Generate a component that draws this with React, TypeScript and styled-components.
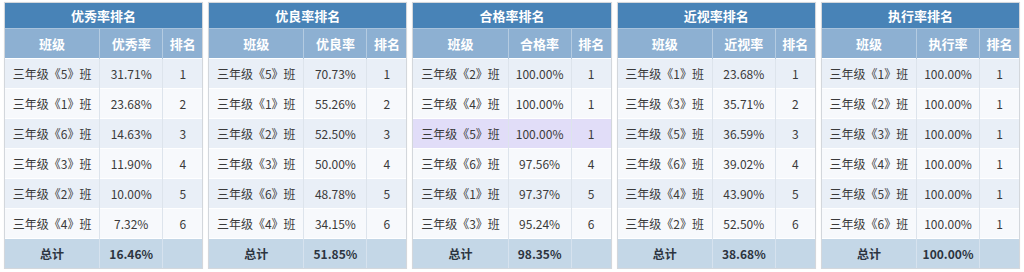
import React from 'react';
import styled, { createGlobalStyle } from 'styled-components';

const GlobalStyle = createGlobalStyle`
    body {
        margin: 0;
        background: #fff;
        font-family: "Noto Sans CJK SC", "Liberation Sans", sans-serif;
    }
`;

const Container = styled.div`
    display: flex;
    gap: 5px;
    padding: 2px 4px 0 4px;
`;

const Panel = styled.div`
    flex: 1;
    min-width: 0;
    border: 1px solid #d3d7dc;
    box-shadow: 0 0 1px rgba(0, 0, 0, 0.08);
`;

const Board = styled.table`
    width: 100%;
    border-collapse: collapse;
    table-layout: fixed;
    font-size: 12px;
    color: #3a3a3a;
`;

const Title = styled.th`
    height: 25px;
    padding: 0;
    background: #4883b7;
    color: #fff;
    font-size: 13px;
    font-weight: bold;
    text-align: center;
`;

const Head = styled.th`
    height: 29px;
    padding: 0;
    background: #8db0d2;
    color: #fff;
    font-size: 13px;
    font-weight: bold;
    text-align: center;
    border-top: 1px solid #a9c3dc;
    border-left: 1px solid #b4cbe1;

    &:first-child {
        border-left: none;
    }
`;

const Row = styled.tr<{ $alt: boolean; $mark?: boolean }>`
    background: ${({ $alt, $mark }) => ($mark ? '#e1ddf8' : $alt ? '#f7f9fc' : '#e9eff7')};
`;

const Cell = styled.td`
    height: 29px;
    padding: 0;
    text-align: center;
    border-top: 1px solid #fff;
    border-left: 1px solid #dde4ec;

    &:first-child {
        border-left: none;
    }
`;

const Total = styled.td`
    height: 29px;
    padding: 0;
    text-align: center;
    background: #c4d7e7;
    font-weight: bold;
    color: #2c3440;
    border-top: 1px solid #fff;
    border-left: 1px solid #d6e2ee;

    &:first-child {
        border-left: none;
    }
`;

type Item = [string, string, number];

type Rank = {
    title: string;
    label: string;
    total: string;
    rows: Item[];
    mark?: number;
};

const cls = (n: number) => `三年级《${n}》班`;

const ranks: Rank[] = [
    {
        title: '优秀率排名', label: '优秀率', total: '16.46%',
        rows: [[cls(5), '31.71%', 1], [cls(1), '23.68%', 2], [cls(6), '14.63%', 3], [cls(3), '11.90%', 4], [cls(2), '10.00%', 5], [cls(4), '7.32%', 6]],
    },
    {
        title: '优良率排名', label: '优良率', total: '51.85%',
        rows: [[cls(5), '70.73%', 1], [cls(1), '55.26%', 2], [cls(2), '52.50%', 3], [cls(3), '50.00%', 4], [cls(6), '48.78%', 5], [cls(4), '34.15%', 6]],
    },
    {
        title: '合格率排名', label: '合格率', total: '98.35%', mark: 2,
        rows: [[cls(2), '100.00%', 1], [cls(4), '100.00%', 1], [cls(5), '100.00%', 1], [cls(6), '97.56%', 4], [cls(1), '97.37%', 5], [cls(3), '95.24%', 6]],
    },
    {
        title: '近视率排名', label: '近视率', total: '38.68%',
        rows: [[cls(1), '23.68%', 1], [cls(3), '35.71%', 2], [cls(5), '36.59%', 3], [cls(6), '39.02%', 4], [cls(4), '43.90%', 5], [cls(2), '52.50%', 6]],
    },
    {
        title: '执行率排名', label: '执行率', total: '100.00%',
        rows: [1, 2, 3, 4, 5, 6].map((n) => [cls(n), '100.00%', 1] as Item),
    },
];

const App: React.FC = () => (
    <>
        <GlobalStyle />
        <Container>
            {ranks.map((rank) => (
                <Panel key={rank.title}>
                    <Board>
                        <colgroup>
                            <col style={{ width: '48%' }} />
                            <col style={{ width: '32%' }} />
                            <col style={{ width: '20%' }} />
                        </colgroup>
                        <thead>
                            <tr><Title colSpan={3}>{rank.title}</Title></tr>
                            <tr>
                                <Head>班级</Head>
                                <Head>{rank.label}</Head>
                                <Head>排名</Head>
                            </tr>
                        </thead>
                        <tbody>
                            {rank.rows.map((row, idx) => (
                                <Row key={idx} $alt={idx % 2 === 1} $mark={rank.mark === idx}>
                                    <Cell>{row[0]}</Cell>
                                    <Cell>{row[1]}</Cell>
                                    <Cell>{row[2]}</Cell>
                                </Row>
                            ))}
                            <tr>
                                <Total>总计</Total>
                                <Total>{rank.total}</Total>
                                <Total />
                            </tr>
                        </tbody>
                    </Board>
                </Panel>
            ))}
        </Container>
    </>
);

export default App;
